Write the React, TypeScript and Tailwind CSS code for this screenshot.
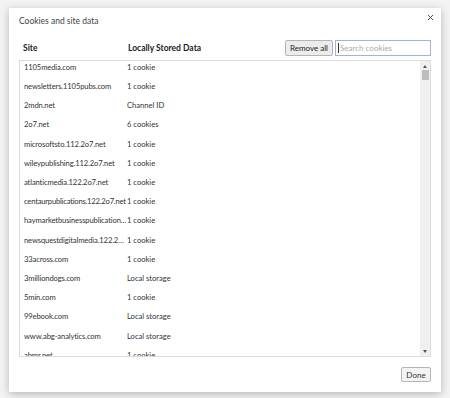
import { X } from "lucide-react";

const rows: [string, string][] = [
  ["1105media.com", "1 cookie"],
  ["newsletters.1105pubs.com", "1 cookie"],
  ["2mdn.net", "Channel ID"],
  ["2o7.net", "6 cookies"],
  ["microsoftsto.112.2o7.net", "1 cookie"],
  ["wileypublishing.112.2o7.net", "1 cookie"],
  ["atlanticmedia.122.2o7.net", "1 cookie"],
  ["centaurpublications.122.2o7.net", "1 cookie"],
  ["haymarketbusinesspublications.122.2o7.net", "1 cookie"],
  ["newsquestdigitalmedia.122.2o7.net", "1 cookie"],
  ["33across.com", "1 cookie"],
  ["3milliondogs.com", "Local storage"],
  ["5min.com", "1 cookie"],
  ["99ebook.com", "Local storage"],
  ["www.abg-analytics.com", "Local storage"],
  ["abmr.net", "1 cookie"],
];

export default function App() {
  return (
    <div
      className="h-[398px] w-[450px] overflow-hidden bg-[#f3f3f3] pl-[9px] pt-[8px]"
      style={{ fontFamily: 'Lato, "Noto Sans", sans-serif' }}
    >
      <div className="relative flex h-[384px] w-[432px] flex-col bg-white px-[10px] shadow-[0_2px_8px_rgba(0,0,0,0.25)]">
        <X className="absolute right-[6px] top-[5px] h-[9px] w-[9px] text-[#444]" strokeWidth={2.5} />
        <div className="pt-[7px] text-[8.5px] leading-[12px] text-[#444]">Cookies and site data</div>

        <div className="mt-[13px] flex h-[16px] items-center">
          <div className="w-[109px] pl-[4px] text-[8.5px] font-bold text-[#222]">Site</div>
          <div className="flex-1 text-[8.5px] font-bold text-[#222]">Locally Stored Data</div>
          <button className="h-[16px] w-[48px] rounded-[2px] border border-[#b5b5b5] bg-[#ececec] text-[8px] text-[#222]">
            Remove all
          </button>
          <div className="ml-[2px] flex h-[16px] w-[96px] items-center border border-[#9fb4d6] bg-white pl-[2px] text-[8px] text-[#aaa]">
            <span className="mr-[1px] h-[10px] w-px bg-[#333]" />
            Search cookies
          </div>
        </div>

        <div className="mt-[4px] flex h-[297px] border border-[#dcdcdc]">
          <div className="flex-1 overflow-hidden">
            <div className="-mt-[3px]">
              {rows.map(([site, data], i) => (
                <div key={i} className="flex h-[19.2px] items-center text-[7.6px] text-[#333]">
                  {site.length === 31 ? (
                    <div className="w-[107px] shrink-0 whitespace-nowrap pl-[4px] tracking-[-0.2px]">{site}</div>
                  ) : (
                    <div className="w-[107px] shrink-0 truncate pl-[4px] tracking-[-0.12px]">{site}</div>
                  )}
                  <div className="whitespace-nowrap">{data}</div>
                </div>
              ))}
            </div>
          </div>
          <div className="flex w-[10px] flex-col items-center bg-[#f0f0f0]">
            <div className="mt-[4px] h-0 w-0 border-x-[2.5px] border-b-[3px] border-x-transparent border-b-[#555]" />
            <div className="mt-[2px] h-[10px] w-[7px] bg-[#bdbdbd]" />
            <div className="flex-1" />
            <div className="mb-[3px] h-0 w-0 border-x-[2.5px] border-t-[3px] border-x-transparent border-t-[#555]" />
          </div>
        </div>

        <div className="mt-[10px] flex justify-end">
          <button className="h-[15px] w-[30px] rounded-[2px] border border-[#b5b5b5] bg-[#f3f3f3] text-[8px] text-[#333]">
            Done
          </button>
        </div>
      </div>
    </div>
  );
}
